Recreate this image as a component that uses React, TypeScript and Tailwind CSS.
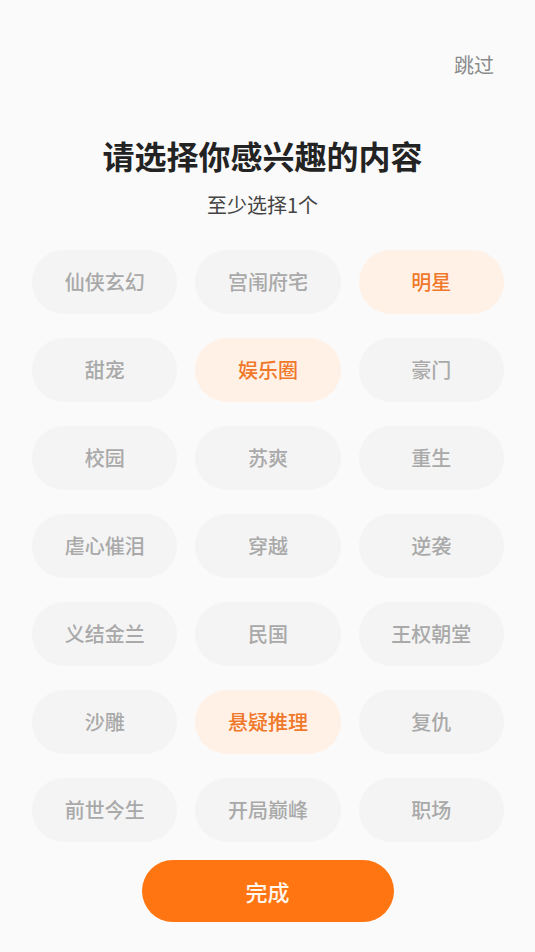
import { useState } from "react";

const TAGS = [
  "仙侠玄幻", "宫闱府宅", "明星",
  "甜宠", "娱乐圈", "豪门",
  "校园", "苏爽", "重生",
  "虐心催泪", "穿越", "逆袭",
  "义结金兰", "民国", "王权朝堂",
  "沙雕", "悬疑推理", "复仇",
  "前世今生", "开局巅峰", "职场",
];

export default function App() {
  const [selected, setSelected] = useState<string[]>(["明星", "娱乐圈", "悬疑推理"]);

  const toggle = (tag: string) => {
    setSelected((prev) =>
      prev.includes(tag) ? prev.filter((t) => t !== tag) : [...prev, tag]
    );
  };

  return (
    <div
      className="min-h-screen w-full bg-[#fafafa] flex flex-col"
      style={{ fontFamily: '"Noto Sans CJK SC", "Noto Sans", sans-serif' }}
    >
      {/* Skip */}
      <div className="flex justify-end pt-[51px] pr-[41px]">
        <button className="text-[20px] leading-[28px] text-[#8a8a8a]">跳过</button>
      </div>

      {/* Heading */}
      <h1 className="mt-[56px] pr-[10px] text-center text-[32px] leading-[40px] font-bold text-[#232323]">
        请选择你感兴趣的内容
      </h1>
      <p className="mt-[16px] pr-[10px] text-center text-[20px] leading-[28px] text-[#444444]">
        至少选择1个
      </p>

      {/* Tags */}
      <div className="mt-[31px] grid grid-cols-3 gap-x-[18px] gap-y-[24px] pl-[32px] pr-[31px]">
        {TAGS.map((tag) => {
          const on = selected.includes(tag);
          return (
            <button
              key={tag}
              onClick={() => toggle(tag)}
              className={
                on
                  ? "h-[64px] rounded-full bg-[#fff1e6] text-[#f0782a] text-[20px] font-medium"
                  : "h-[64px] rounded-full bg-[#f4f4f4] text-[#a9a9a9] text-[20px] font-medium"
              }
            >
              {tag}
            </button>
          );
        })}
      </div>

      {/* Done */}
      <button className="mt-[18px] self-center w-[252px] h-[62px] rounded-full bg-[#ff7512] text-[22px] font-medium text-[#fff6ec]">
        完成
      </button>
    </div>
  );
}
